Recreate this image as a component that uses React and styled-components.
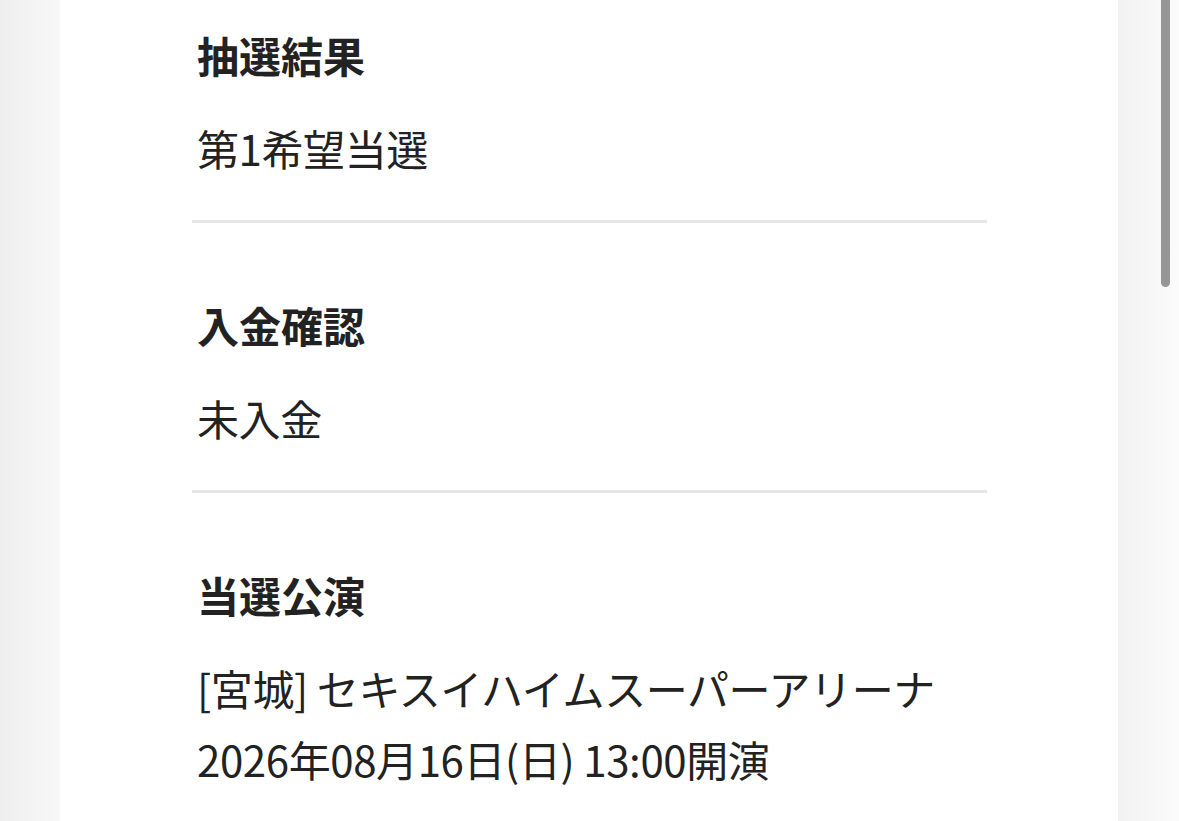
import React from 'react';
import styled, { createGlobalStyle } from 'styled-components';

const sections = [
  { title: '抽選結果', lines: ['第1希望当選'] },
  { title: '入金確認', lines: ['未入金'] },
  {
    title: '当選公演',
    lines: ['[宮城] セキスイハイムスーパーアリーナ', '2026年08月16日(日) 13:00開演']
  }
];

const App = () => (
  <>
    <GlobalStyle />
    <Page>
      <Card>
        {sections.map((section, i) => (
          <Section key={section.title} $last={i === sections.length - 1}>
            <Title>{section.title}</Title>
            <Body>
              {section.lines.map((line) => (
                <Line key={line}>{line}</Line>
              ))}
            </Body>
          </Section>
        ))}
      </Card>
      <ScrollThumb />
    </Page>
  </>
);

export default App;

const GlobalStyle = createGlobalStyle`
  html, body {
    margin: 0;
    padding: 0;
    height: 100%;
    overflow: hidden;
  }
  body {
    font-family: "Noto Sans CJK JP", "Noto Sans", sans-serif;
    color: #222222;
    background: linear-gradient(
      to right,
      #eeeeee 0,
      #f8f8f8 60px,
      #f2f2f2 1118px,
      #fbfbfb 100%
    );
  }
`;

const Page = styled.div`
  position: relative;
  height: 821px;
  display: flex;
  justify-content: flex-start;
  padding-left: 60px;
  overflow: hidden;
`;

const Card = styled.div`
  width: 1058px;
  height: 100%;
  background: #ffffff;
  padding: 0 131px 0 132px;
  box-sizing: border-box;
`;

const Section = styled.section`
  padding: 70px 0 37px;
  border-bottom: ${({ $last }) => ($last ? 'none' : '3px solid #e6e6e6')};

  &:first-child {
    padding-top: 23px;
  }
`;

const Title = styled.h2`
  margin: 0;
  padding-left: 5px;
  font-size: 42px;
  line-height: 63px;
  font-weight: 700;
  color: #222222;
`;

const Body = styled.div`
  margin-top: 26px;
  padding-left: 5px;
`;

const Line = styled.p`
  margin: 0;
  font-size: 42px;
  line-height: 71px;
  font-weight: 400;
  letter-spacing: -0.4px;
  color: #222222;
  white-space: nowrap;
`;

const ScrollThumb = styled.div`
  position: absolute;
  top: -20px;
  left: 1161px;
  width: 9px;
  height: 307px;
  border-radius: 5px;
  background: #969696;
`;
